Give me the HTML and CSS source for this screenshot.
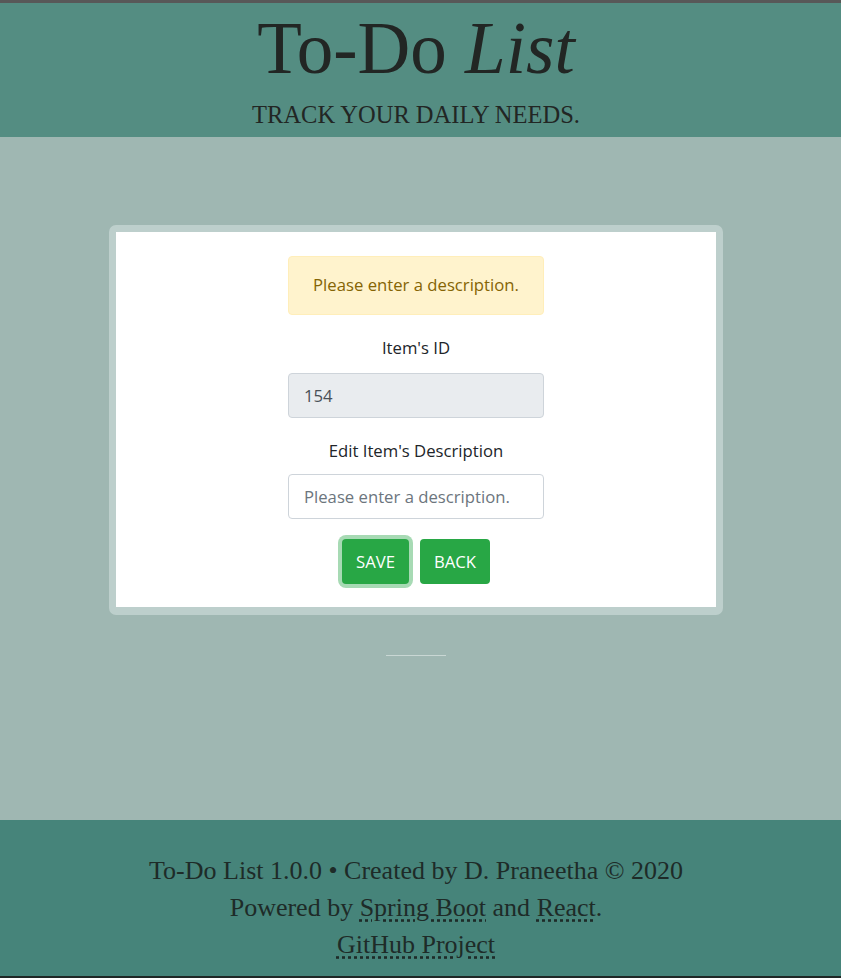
FILE: index.html
```html
<!DOCTYPE html>
<html lang="en">
<head>
<meta charset="utf-8">
<title>To-Do List</title>
<link rel="stylesheet" href="styles.css">
</head>
<body>
<header class="site-header">
  <h1 class="title">To-Do <em>List</em></h1>
  <p class="subtitle">TRACK YOUR DAILY NEEDS.</p>
</header>
<main class="main">
  <div class="card">
    <div class="card-body">
      <div class="alert">Please enter a description.</div>
      <label class="field-label">Item's ID</label>
      <input class="field field-readonly" type="text" value="154" readonly>
      <label class="field-label field-label-second">Edit Item's Description</label>
      <input class="field" type="text" placeholder="Please enter a description.">
      <div class="actions">
        <button class="btn btn-focus">SAVE</button>
        <button class="btn">BACK</button>
      </div>
    </div>
  </div>
  <hr class="divider">
</main>
<footer class="site-footer">
  <p class="footer-line">To-Do List 1.0.0 • Created by D. Praneetha © 2020</p>
  <p class="footer-line">Powered by <a class="dotted" href="#">Spring Boot</a> and <a class="dotted" href="#">React</a>.</p>
  <p class="footer-line"><a class="dotted" href="#">GitHub Project</a></p>
</footer>
</body>
</html>
```
FILE: styles.css
```css
html, body {
  margin: 0;
  padding: 0;
}
body {
  border-top: 3px solid #585858;
  border-bottom: 2px solid #1f2826;
  background: #9fb7b2;
  font-family: "Liberation Serif", "Times New Roman", serif;
  color: #212529;
}
.site-header {
  background: #548d82;
  height: 134px;
  box-sizing: border-box;
  padding: 10px 9px 0 0;
  text-align: center;
}
.title {
  margin: 0;
  font-size: 73px;
  line-height: 72px;
  font-weight: 400;
  color: #222624;
}
.title em {
  font-style: italic;
}
.subtitle {
  margin: 15px 0 0;
  font-size: 24.5px;
  line-height: 30px;
  color: #222624;
}
.main {
  height: 683px;
  box-sizing: border-box;
  padding: 88px 9px 0 0;
  display: flex;
  flex-direction: column;
  align-items: center;
}
.card {
  width: 600px;
  border: 7px solid #bdcfcc;
  border-bottom-width: 8px;
  border-radius: 7px;
  background: #fff;
}
.card-body {
  padding: 24px 0 23px;
  display: flex;
  flex-direction: column;
  align-items: center;
  font-family: "Open Sans", "Noto Sans", sans-serif;
  font-size: 16.7px;
}
.alert {
  width: 256px;
  box-sizing: border-box;
  padding: 16px 0 17px;
  line-height: 24px;
  text-align: center;
  background: #fff3cd;
  border: 1px solid #ffeeba;
  border-radius: 4px;
  color: #856404;
}
.field-label {
  margin-top: 21px;
  line-height: 24px;
  color: #212529;
}
.field-label-second {
  margin-top: 21px;
}
.field {
  margin-top: 13px;
  width: 256px;
  height: 45px;
  box-sizing: border-box;
  padding: 0 15px;
  border: 1px solid #ced4da;
  border-radius: 4px;
  font-family: "Open Sans", "Noto Sans", sans-serif;
  font-size: 16.7px;
  color: #495057;
  background: #fff;
  outline: none;
}
.field-label-second + .field {
  margin-top: 11px;
}
.field-readonly {
  background: #e9ecef;
}
.field::placeholder {
  color: #6c757d;
}
.actions {
  margin-top: 20px;
  display: flex;
  gap: 11px;
}
.btn {
  height: 45px;
  padding: 0 14px;
  border: none;
  border-radius: 4px;
  background: #28a745;
  color: #fff;
  font-family: "Open Sans", "Noto Sans", sans-serif;
  font-size: 16.7px;
}
.btn-focus {
  box-shadow: 0 0 0 4px #a7dab4;
}
.divider {
  margin: 40px 0 0;
  width: 60px;
  border: none;
  border-top: 1px solid #c9d7d4;
}
.site-footer {
  background: #46847a;
  height: 156px;
  box-sizing: border-box;
  padding: 32px 9px 0 0;
  text-align: center;
  color: #1e2b28;
  font-size: 26px;
}
.footer-line {
  margin: 0;
  line-height: 37px;
}
.dotted {
  color: inherit;
  text-decoration: underline dotted;
  text-underline-offset: 3px;
}
```
